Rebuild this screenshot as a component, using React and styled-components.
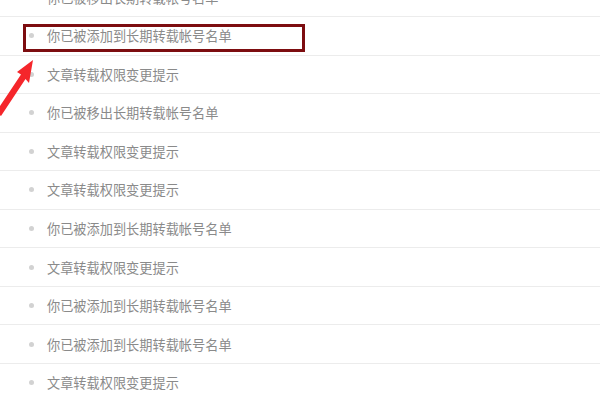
import React from "react";
import styled, { createGlobalStyle } from "styled-components";

const Global = createGlobalStyle`
  html, body { margin: 0; padding: 0; background: #fff; }
  body { width: 600px; height: 400px; overflow: hidden; }
`;

const Page = styled.div`
  position: relative;
  width: 600px;
  height: 400px;
  overflow: hidden;
  background: #fff;
`;

const List = styled.ul`
  list-style: none;
  margin: -21.6px 0 0 0;
  padding: 0;
`;

const Row = styled.li`
  box-sizing: border-box;
  height: 38.56px;
  display: flex;
  align-items: center;
  padding-left: 29px;
  border-bottom: 1.5px solid #ececec;
  font-family: "Noto Sans CJK SC", "Microsoft YaHei", sans-serif;
  font-size: 13.2px;
  color: #8a8a8a;
`;

const Dot = styled.span`
  width: 5px;
  height: 5px;
  border-radius: 50%;
  background: #d2d2d2;
  margin-right: 13px;
  flex: none;
`;

const Highlight = styled.div`
  position: absolute;
  left: 23px;
  top: 24px;
  width: 282px;
  height: 28px;
  box-sizing: border-box;
  border: 3px solid #7d0d10;
`;

const Arrow = styled.svg`
  position: absolute;
  left: 0;
  top: 55px;
`;

const items = [
  "你已被移出长期转载帐号名单",
  "你已被添加到长期转载帐号名单",
  "文章转载权限变更提示",
  "你已被移出长期转载帐号名单",
  "文章转载权限变更提示",
  "文章转载权限变更提示",
  "你已被添加到长期转载帐号名单",
  "文章转载权限变更提示",
  "你已被添加到长期转载帐号名单",
  "你已被添加到长期转载帐号名单",
  "文章转载权限变更提示",
];

export default function App() {
  return (
    <Page>
      <Global />
      <List>
        {items.map((t, i) => (
          <Row key={i}>
            <Dot />
            {t}
          </Row>
        ))}
      </List>
      <Highlight />
      <Arrow width="50" height="70" viewBox="0 0 50 70">
        <polygon points="33,5 17,17 21,19.5 -4,57 1,61 25.5,24 29,28" fill="#f5262b" />
      </Arrow>
    </Page>
  );
}
